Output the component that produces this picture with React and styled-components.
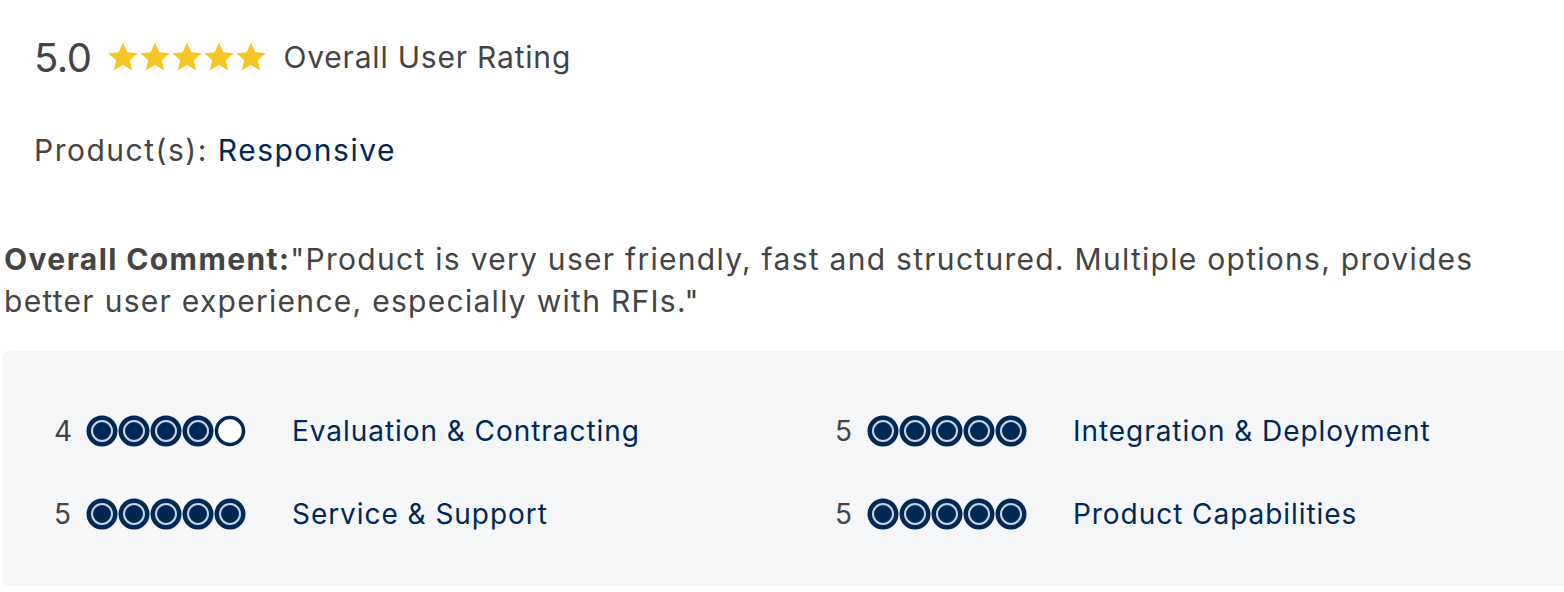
import React from 'react'
import styled, { createGlobalStyle } from 'styled-components'

const GlobalStyle = createGlobalStyle`
    body {
        margin: 0;
        background: #ffffff;
        font-family: Inter, "Noto Sans", Arial, sans-serif;
        overflow: hidden;
    }
`

const Page = styled.div`
    width: 1564px;
    padding-left: 3px;
    box-sizing: border-box;
`

const Summary = styled.div`
    padding: 29px 0 0 31px;
`

const RatingLine = styled.div`
    display: flex;
    align-items: center;
    height: 56px;
`

const Score = styled.span`
    font-size: 40px;
    color: #444444;
    letter-spacing: -0.5px;
    margin-right: 16px;
`

const Stars = styled.div`
    display: flex;
    margin-right: 16px;
`

const RatingLabel = styled.span`
    font-size: 30px;
    letter-spacing: 0.8px;
    color: #444444;
`

const ProductLine = styled.div`
    margin-top: 47px;
    font-size: 30px;
    letter-spacing: 1.5px;
    color: #444444;
`

const ProductLink = styled.span`
    color: #002856;
`

const Comment = styled.p`
    margin: 70px 0 0 1px;
    width: 1530px;
    font-size: 30px;
    letter-spacing: 1.28px;
    line-height: 42px;
    color: #444444;
`

const Bold = styled.b`
    font-weight: 700;
    letter-spacing: 1.4px;
`

const ScoreBox = styled.div`
    margin-top: 29px;
    margin-right: -8px;
    background: #f4f6f8;
    border-radius: 6px;
    padding: 60px 0 52px 51px;
    display: grid;
    grid-template-columns: 781px 1fr;
    row-gap: 43px;
`

const Category = styled.div`
    display: flex;
    align-items: center;
    height: 40px;
`

const Value = styled.span`
    width: 32px;
    font-size: 28px;
    color: #444444;
`

const Dots = styled.div`
    display: flex;
    margin-right: 46px;
`

const CategoryName = styled.span`
    font-size: 28px;
    letter-spacing: 0.95px;
    color: #002856;
`

const Star = () => (
    <svg width="32" height="32" viewBox="0 0 32 32">
        <polygon
            points="16,1.5 20.2,11.3 30.8,12.2 22.8,19.2 25.2,29.6 16,24.1 6.8,29.6 9.2,19.2 1.2,12.2 11.8,11.3"
            fill="#f3c623"
        />
    </svg>
)

const Dot = ({ filled }) => (
    <svg width="32" height="32" viewBox="0 0 32 32">
        {filled ? (
            <>
                <circle cx="16" cy="16" r="15.5" fill="#002856" />
                <circle cx="16" cy="16" r="10" fill="none" stroke="#cdd4de" strokeWidth="2" />
            </>
        ) : (
            <circle cx="16" cy="16" r="13.5" fill="#ffffff" stroke="#002856" strokeWidth="3.5" />
        )}
    </svg>
)

const scores = [
    { name: 'Evaluation & Contracting', value: 4 },
    { name: 'Integration & Deployment', value: 5 },
    { name: 'Service & Support', value: 5 },
    { name: 'Product Capabilities', value: 5 },
]

const App = () => {
    return (
        <Page>
            <GlobalStyle />
            <Summary>
                <RatingLine>
                    <Score>5.0</Score>
                    <Stars>
                        {[0, 1, 2, 3, 4].map(i => <Star key={i} />)}
                    </Stars>
                    <RatingLabel>Overall User Rating</RatingLabel>
                </RatingLine>
                <ProductLine>
                    Product(s): <ProductLink>Responsive</ProductLink>
                </ProductLine>
            </Summary>
            <Comment>
                <Bold>Overall Comment:</Bold>"Product is very user friendly, fast and structured. Multiple options, provides better user experience, especially with RFIs."
            </Comment>
            <ScoreBox>
                {scores.map(s => (
                    <Category key={s.name}>
                        <Value>{s.value}</Value>
                        <Dots>
                            {[1, 2, 3, 4, 5].map(n => <Dot key={n} filled={n <= s.value} />)}
                        </Dots>
                        <CategoryName>{s.name}</CategoryName>
                    </Category>
                ))}
            </ScoreBox>
        </Page>
    )
}

export default App
